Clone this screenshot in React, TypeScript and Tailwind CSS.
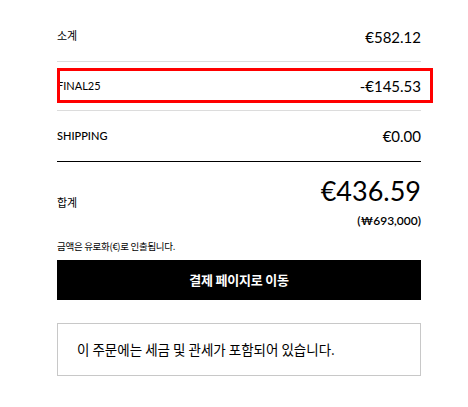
export default function App() {
  const latin = { fontFamily: "Lato, 'Noto Sans CJK KR', sans-serif" };
  const kr = { fontFamily: "'Noto Sans CJK KR', Lato, sans-serif" };
  return (
    <div className="w-[468px] h-[407px] bg-white text-black" style={latin}>
      <div className="ml-[57px] w-[364px] pt-[13px]">
        <div className="h-[49px] flex items-center justify-between border-b border-[#dcdcdc]">
          <span className="text-[11px] pb-[3px]" style={kr}>소계</span>
          <span className="text-[15px]">€582.12</span>
        </div>
        <div className="relative h-[49px] flex items-center justify-between border-b border-[#dcdcdc]">
          <span className="text-[11px]">FINAL25</span>
          <span className="text-[15px]">-€145.53</span>
          <div className="absolute left-0 top-[6px] w-[376px] h-[35px] border-[3px] border-[#ff0000]" />
        </div>
        <div className="h-[51px] flex items-center justify-between border-b border-black">
          <span className="text-[11px] font-medium">SHIPPING</span>
          <span className="text-[15px]">€0.00</span>
        </div>
        <div className="pt-[14px] flex items-center justify-between">
          <span className="text-[11px]" style={kr}>합계</span>
          <div className="flex flex-col items-end">
            <span className="text-[27px] leading-[30px]">€436.59</span>
            <span className="text-[12px] leading-[16px] font-semibold mt-[7px]">(₩693,000)</span>
          </div>
        </div>
        <p className="mt-[10px] text-[9.5px] leading-[14px] tracking-[-0.3px]" style={kr}>금액은 유로화(€)로 인출됩니다.</p>
        <button className="mt-[7px] w-full h-[40px] bg-black text-white text-[13px] font-bold tracking-[-0.2px]" style={kr}>
          결제 페이지로 이동
        </button>
        <div className="mt-[23px] h-[53px] border border-[#c8c8c8] flex items-center pl-[19px]">
          <span className="text-[13.5px]" style={kr}>이 주문에는 세금 및 관세가 포함되어 있습니다.</span>
        </div>
      </div>
    </div>
  );
}
